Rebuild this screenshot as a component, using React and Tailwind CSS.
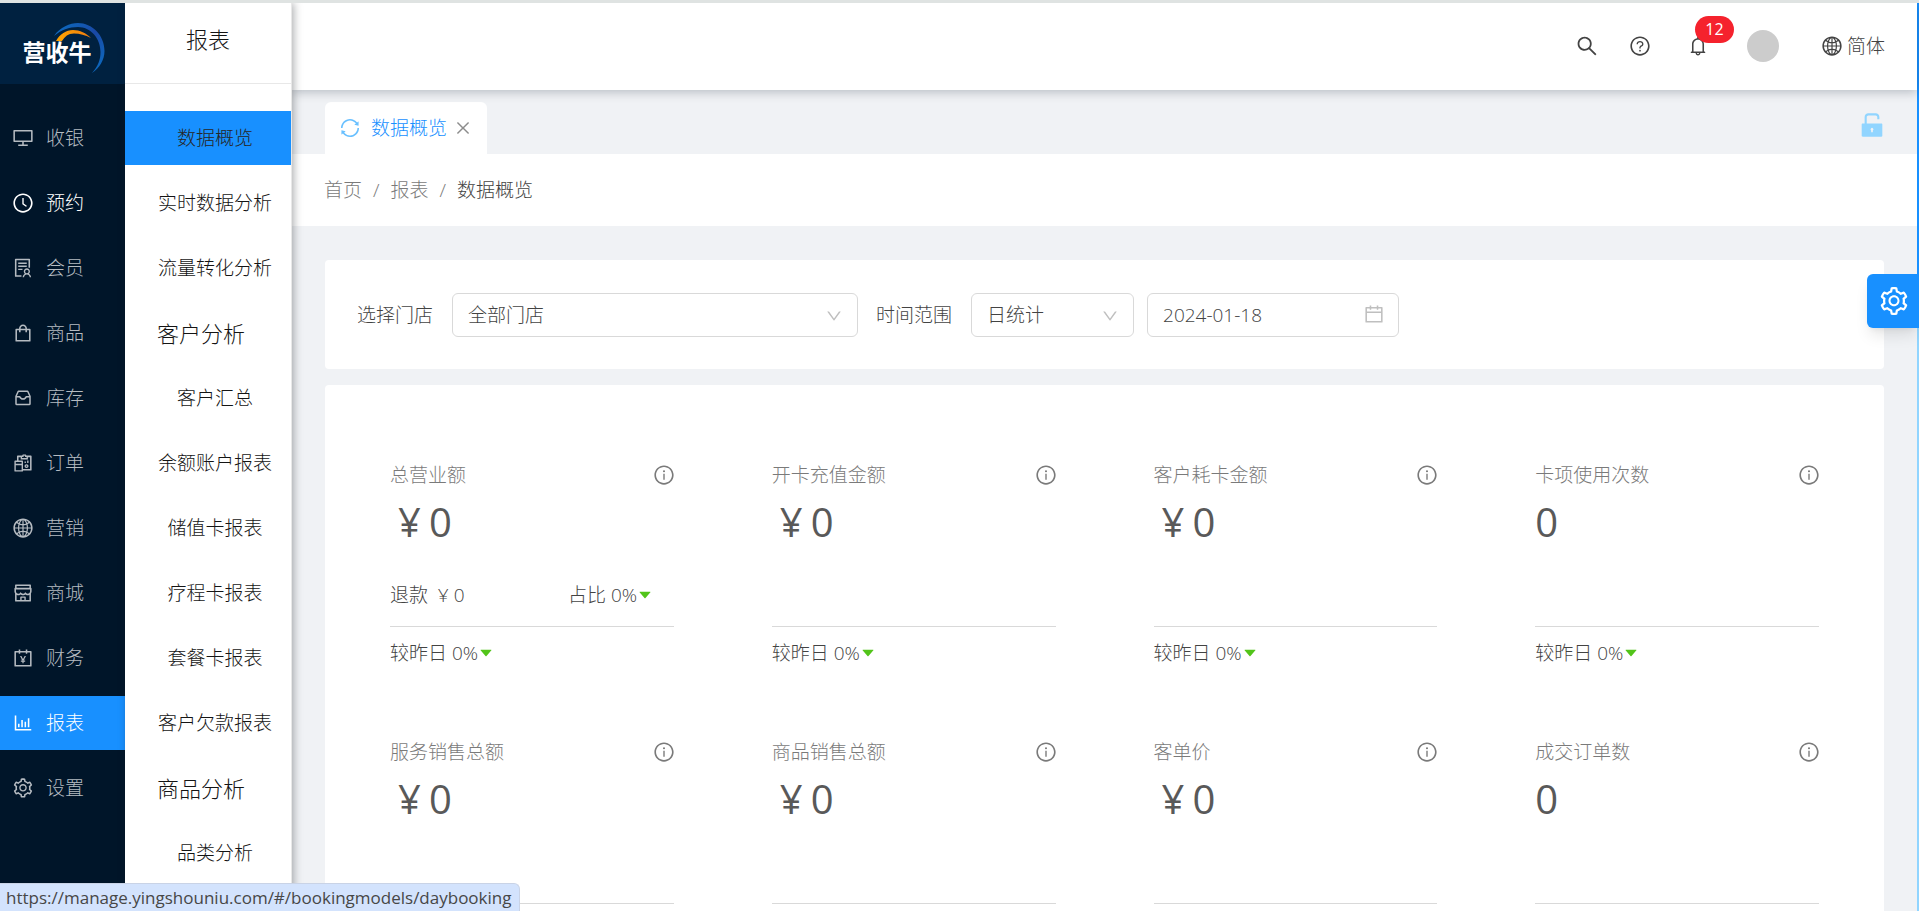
import {
  AiOutlineDesktop, AiOutlineClockCircle, AiOutlineSolution, AiOutlineShopping, AiOutlineReconciliation,
  AiOutlineGlobal, AiOutlineShop, AiOutlineAccountBook, AiOutlineBarChart, AiOutlineSetting, AiOutlineSearch,
  AiOutlineQuestionCircle, AiOutlineBell, AiOutlineSync, AiOutlineClose, AiOutlineDown, AiOutlineCalendar,
  AiOutlineInfoCircle, AiFillUnlock, AiFillCaretDown,
} from 'react-icons/ai'

function StockIcon({ className }) {
  return (
    <svg viewBox="-1.5 -1.5 22 22" className={className} fill="none" stroke="currentColor" strokeWidth="1.5" strokeLinejoin="round" aria-hidden="true">
      <path d="M4.800 2.700h9.400l2.300 5V15.200a.8.8 0 0 1-.8.8H3.300a.8.8 0 0 1-.8-.8V7.700z" />
      <path d="M2.500 8.200H6.300c.6 1.700 1.700 2.300 3.200 2.300s2.600-.6 3.200-2.300h3.800" />
    </svg>
  )
}

const mainMenu = [
  ['收银', AiOutlineDesktop],
  ['预约', AiOutlineClockCircle],
  ['会员', AiOutlineSolution],
  ['商品', AiOutlineShopping],
  ['库存', StockIcon],
  ['订单', AiOutlineReconciliation],
  ['营销', AiOutlineGlobal],
  ['商城', AiOutlineShop],
  ['财务', AiOutlineAccountBook],
  ['报表', AiOutlineBarChart],
  ['设置', AiOutlineSetting],
]

const subMenu = [
  { label: '数据概览', active: true },
  { label: '实时数据分析' },
  { label: '流量转化分析' },
  { label: '客户分析', group: true },
  { label: '客户汇总' },
  { label: '余额账户报表' },
  { label: '储值卡报表' },
  { label: '疗程卡报表' },
  { label: '套餐卡报表' },
  { label: '客户欠款报表' },
  { label: '商品分析', group: true },
  { label: '品类分析' },
]

const stats = [
  { title: '总营业额', money: true, refund: true, compare: true },
  { title: '开卡充值金额', money: true, compare: true },
  { title: '客户耗卡金额', money: true, compare: true },
  { title: '卡项使用次数', compare: true },
  { title: '服务销售总额', money: true },
  { title: '商品销售总额', money: true },
  { title: '客单价', money: true },
  { title: '成交订单数' },
]

function Logo() {
  return (
    <svg viewBox="0 0 125 81" className="block h-[81px] w-full bg-[#002140]" role="img" aria-label="营收牛">
      <defs>
        <linearGradient id="ring" x1="0" y1="0" x2="1" y2="1">
          <stop offset="0" stopColor="#0a6fc2" />
          <stop offset="0.5" stopColor="#1a48a5" />
          <stop offset="1" stopColor="#0a6fc2" />
        </linearGradient>
        <linearGradient id="horn" x1="0" y1="0" x2="1" y2="0">
          <stop offset="0" stopColor="#ffa500" />
          <stop offset="1" stopColor="#f07c10" />
        </linearGradient>
      </defs>
      <path d="M54 33C60 24 70 20 78 20c14 0 26.500 12 26.500 28 0 9-5 17-12.500 22 6-7 8.500-13 8.500-21 0-14-10-25-22.500-25-9 0-17 3-24 9z" fill="url(#ring)" />
      <path d="M56 38c4-7 10-11 17-11 7 0 13 3 18 8-6-3-11-4.500-17-4.500-6 0-9 3-12 7.500z" fill="url(#horn)" />
      <text x="22.500" y="58" fill="#fff" fontSize="23" fontWeight="700" fontFamily="'Noto Sans CJK SC', sans-serif">营收牛</text>
    </svg>
  )
}

function Stat({ title, money, refund, compare }) {
  return (
    <article className="text-[#434343]">
      <div className="flex h-7 items-center justify-between text-[#7a7a7a]">
        <h3>{title}</h3>
        <AiOutlineInfoCircle className="-mr-px size-[22px]" />
      </div>
      <p className="mt-2 flex h-14 items-start text-[40px] font-normal leading-[50px] text-[#595959]">
        {money && <span className="px-2">¥</span>}
        <span>0</span>
      </p>
      <div className="mt-7 flex h-[46px] items-start border-b border-[#d9d9d9]">
        {refund && (
          <>
            <span className="w-[178px]">退款&nbsp; ¥ 0</span>
            <span className="flex items-center">占比 0%<AiFillCaretDown className="size-4 text-[#52c41a]" /></span>
          </>
        )}
      </div>
      <p className="mt-3 flex h-7 items-center">
        {compare && <>较昨日 0%<AiFillCaretDown className="size-4 text-[#52c41a]" /></>}
      </p>
    </article>
  )
}

export default function App() {
  return (
    <div className="relative flex h-screen overflow-hidden border-t-[3px] border-[#dfe3e2] bg-[#f0f2f5] font-['Open_Sans','Noto_Sans_CJK_SC',sans-serif] text-[19px] font-light leading-7">
      <nav className="w-[125px] shrink-0 bg-[#001529]" aria-label="主菜单">
        <Logo />
        <ul className="pt-[27px]">
          {mainMenu.map(([label, Icon]) => (
            <li key={label} className="mb-[11px]">
              <a
                href="#"
                className={
                  'flex h-[54px] items-center gap-3 pl-3 ' +
                  (label === '报表' ? 'bg-[#1890ff] text-white' : label === '预约' ? 'text-white' : 'text-[#b5bbc1]')
                }
              >
                <Icon className="size-[22px]" />
                {label}
              </a>
            </li>
          ))}
        </ul>
      </nav>

      <aside className="z-20 w-[167px] shrink-0 border-r border-[#e8e8e8] bg-white text-[#141414] shadow-[2px_0_8px_rgba(29,35,41,0.35)]">
        <h1 className="flex h-[81px] items-center justify-center border-b border-[#e8e8e8] pb-2 text-[22px]">报表</h1>
        <ul className="pt-[27px]">
          {subMenu.map(({ label, active, group }) => (
            <li key={label} className="mb-[11px]">
              {group ? (
                <h2 className="flex h-[54px] items-center pl-8 text-[22px]">{label}</h2>
              ) : (
                <a href="#" className={'flex h-[54px] items-center justify-center pl-[14px] ' + (active ? 'bg-[#1890ff] text-[#262626]' : '')}>
                  {label}
                </a>
              )}
            </li>
          ))}
        </ul>
      </aside>

      <div className="flex min-w-0 flex-1 flex-col">
        <header className="z-10 flex h-[87px] shrink-0 items-center justify-end bg-white pb-[2px] pr-8 text-[#434343] shadow-[0_2px_10px_rgba(0,21,41,0.25)]">
          <button aria-label="搜索"><AiOutlineSearch className="size-6" /></button>
          <button aria-label="帮助" className="ml-[30px]"><AiOutlineQuestionCircle className="size-[22px]" /></button>
          <button aria-label="通知" className="relative ml-9">
            <AiOutlineBell className="size-[22px]" />
            <span className="absolute -top-[19px] left-2 flex h-[27px] w-[39px] items-center justify-center rounded-full bg-[#f5222d] text-base font-normal text-white">12</span>
          </button>
          <span className="ml-[38px] size-8 rounded-full bg-[#ccc]" />
          <button className="ml-[42px] flex items-center gap-1"><AiOutlineGlobal className="size-[22px]" />简体</button>
        </header>

        <div className="flex h-16 shrink-0 items-end justify-between pl-[33px] pr-[30px]">
          <div className="flex h-[52px] items-center rounded-t-md bg-white pl-[14px] pr-[15px] text-[#1890ff]">
            <AiOutlineSync className="size-[22px] text-[#69c0ff]" />
            <span className="ml-[10px]">数据概览</span>
            <button aria-label="关闭" className="ml-[7px]"><AiOutlineClose className="size-[18px] text-[#8c8c8c]" /></button>
          </div>
          <button aria-label="解锁" className="mb-[14px]"><AiFillUnlock className="size-[30px] text-[#91d5ff]" /></button>
        </div>

        <div className="flex h-[72px] shrink-0 items-center gap-[11px] bg-white pl-8 text-[#7a7a7a]">
          <a href="#">首页</a><span>/</span><a href="#">报表</a><span>/</span><span className="text-[#434343]">数据概览</span>
        </div>

        <main className="flex flex-1 flex-col pl-[33px] pr-[33px] pt-[34px]">
          <form className="flex h-[109px] shrink-0 items-center rounded-sm bg-white pl-8 text-[#434343]">
            <label htmlFor="store">选择门店</label>
            <div className="relative ml-[19px] w-[406px]">
              <select id="store" className="h-11 w-full appearance-none rounded-md border border-[#d9d9d9] bg-white pl-[15px]"><option>全部门店</option></select>
              <AiOutlineDown className="pointer-events-none absolute right-[15px] top-[14px] size-[18px] text-[#bfbfbf]" />
            </div>
            <label htmlFor="range" className="ml-[18px]">时间范围</label>
            <div className="relative ml-[19px] w-[163px]">
              <select id="range" className="h-11 w-full appearance-none rounded-md border border-[#d9d9d9] bg-white pl-[15px]"><option>日统计</option></select>
              <AiOutlineDown className="pointer-events-none absolute right-[15px] top-[14px] size-[18px] text-[#bfbfbf]" />
            </div>
            <div className="relative ml-[13px] w-[252px]">
              <input aria-label="日期" defaultValue="2024-01-18" className="block h-11 w-full rounded-md border border-[#d9d9d9] pl-[15px] text-[19px]" />
              <AiOutlineCalendar className="pointer-events-none absolute right-[14px] top-[10px] size-[22px] text-[#bfbfbf]" />
            </div>
          </form>

          <section className="mt-4 grid shrink-0 grid-cols-4 gap-x-[98px] gap-y-[71px] rounded-sm bg-white px-[65px] pb-16 pt-[76px]">
            {stats.map((s) => <Stat key={s.title} {...s} />)}
          </section>
        </main>
      </div>

      <div className="flex w-[2px] shrink-0 flex-col bg-[#91d5ff]" aria-hidden="true">
        <div className="h-[322px] bg-[#1890ff]" />
      </div>

      <button aria-label="设置" className="absolute right-0 top-[271px] z-30 flex h-[54px] w-[52px] items-center justify-center rounded-l-md bg-[#1890ff] pl-[2px] text-white shadow-lg">
        <AiOutlineSetting className="size-8" />
      </button>

      <div className="absolute bottom-0 left-0 z-30 flex h-[28px] items-center rounded-tr-md border-t border-r border-[#c9d3e6] bg-[#d3e3fd] pl-[6px] pr-2 text-[17px] font-normal text-[#474747]">
        https://manage.yingshouniu.com/#/bookingmodels/daybooking
      </div>
    </div>
  )
}
